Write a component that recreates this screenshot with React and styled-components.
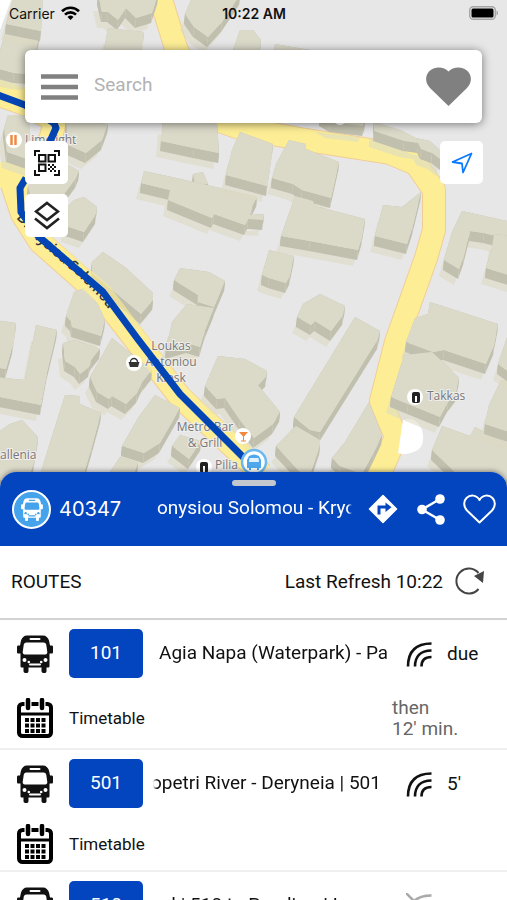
import React from "react"
import styled, { createGlobalStyle } from "styled-components"

const GlobalStyle = createGlobalStyle`
    * {
        box-sizing: border-box;
    }

    body {
        margin: 0;
        background-color: #fff;
        color: #111;
        font-family: Roboto, 'Liberation Sans', sans-serif;
    }

    button {
        padding: 0;
        border: none;
        background: none;
        color: inherit;
        font: inherit;
        cursor: pointer;
    }
`

const Page = styled.div`
    display: flex;
    flex-direction: column;
    height: 100vh;
    overflow: hidden;
`

const MapArea = styled.main`
    position: relative;
    flex: 0 0 54vh;
`

const MapCanvas = styled.svg`
    position: absolute;
    top: 0;
    left: 0;
    width: 100%;
    height: 100%;
    background-color: #e8e7e8;
`

const Overlay = styled.div`
    position: relative;
`

const StatusBar = styled.div`
    display: grid;
    grid-template-columns: 1fr auto 1fr;
    align-items: center;
    height: 28px;
    padding: 0 8px 2px 9px;
    font-family: Inter, sans-serif;
    font-size: 14px;
    color: #111;
`

const Carrier = styled.span`
    display: flex;
    align-items: center;
    gap: 6px;
`

const Clock = styled.time`
    font-weight: 600;
`

const Battery = styled.span`
    display: flex;
    justify-content: flex-end;
`

const SearchCard = styled.form`
    display: flex;
    align-items: center;
    gap: 16px;
    height: 73px;
    margin: 22px 25px 18px;
    padding: 0 11px 0 16px;
    border-radius: 6px;
    background-color: #fff;
    box-shadow: 0 1px 10px rgba(0, 0, 0, 0.5);
`

const SearchInput = styled.input`
    flex: 1;
    min-width: 0;
    padding: 0 0 4px;
    border: none;
    outline: none;
    background: none;
    font-family: inherit;
    font-size: 19px;

    &::placeholder {
        color: #b2b2b2;
        opacity: 1;
    }
`

const IconButton = styled.button`
    display: flex;
    flex-shrink: 0;
`

const MapControls = styled.div`
    display: flex;
    justify-content: space-between;
    align-items: flex-start;
    padding: 0 24px 0 25px;
`

const ControlStack = styled.div`
    display: flex;
    flex-direction: column;
    gap: 10px;
`

const MapButton = styled.button`
    display: flex;
    align-items: center;
    justify-content: center;
    width: 43px;
    height: 43px;
    border-radius: 5px;
    background-color: #fff;
`

const Sheet = styled.section`
    position: relative;
    flex: 1;
    min-height: 0;
    margin-top: -14px;
    overflow: hidden;
    border-radius: 16px 16px 0 0;
    background-color: #fff;
    box-shadow: 0 -1px 5px rgba(0, 0, 0, 0.4);
`

const StopHeader = styled.header`
    height: 74px;
    padding-top: 8px;
    background-color: #0345bf;
    color: #fff;
`

const Grabber = styled.div`
    width: 44px;
    height: 6px;
    margin: 0 auto;
    border-radius: 3px;
    background-color: #c3c8ce;
`

const StopInfo = styled.div`
    display: flex;
    align-items: center;
    height: 46px;
    padding: 0 11px 0 12px;
`

const StopBadge = styled.span`
    display: flex;
    align-items: center;
    justify-content: center;
    width: 39px;
    height: 39px;
    border: 2px solid #fff;
    border-radius: 50%;
    background-color: #45a3ec;
`

const StopCode = styled.span`
    width: 102px;
    padding-left: 8px;
    font-family: Inter, sans-serif;
    font-size: 20px;
`

const Ticker = styled.span`
    flex: 1;
    min-width: 0;
    padding-bottom: 2px;
    overflow: hidden;
    white-space: nowrap;
    font-size: 19px;
    line-height: 26px;
    text-indent: ${({ $shift }) => $shift || 0}px;
    mask-image: linear-gradient(to right, transparent, #000 4px, #000 calc(100% - 4px), transparent);
`

const StopActions = styled.div`
    display: flex;
    align-items: center;
    justify-content: space-between;
    width: 128px;
    margin-left: 16px;
`

const RoutesBar = styled.div`
    display: flex;
    align-items: center;
    height: 74px;
    padding: 0 22px 2px 11px;
    border-bottom: 2px solid #d2d2d2;
    font-size: 19px;
`

const RoutesTitle = styled.h2`
    flex: 1;
    margin: 0;
    font-size: 19px;
    font-weight: 400;
`

const Refresh = styled.button`
    display: flex;
    align-items: center;
    gap: 12px;
`

const RouteList = styled.ul`
    margin: 0;
    padding: 0;
    list-style: none;
`

const RouteItem = styled.li`
    padding: 9px 17px 0;
    border-bottom: 2px solid #efefef;
`

const RouteLine = styled.div`
    display: flex;
    align-items: center;
    height: 49px;
`

const RouteNumber = styled.a`
    display: flex;
    align-items: center;
    justify-content: center;
    width: 74px;
    height: 49px;
    margin: 0 10px 0 16px;
    padding-bottom: 2px;
    border-radius: 5px;
    background-color: #0345bf;
    color: #fff;
    font-size: 19px;
    text-decoration: none;
`

const Arrival = styled.span`
    display: flex;
    align-items: center;
    gap: 15px;
    width: 84px;
    margin-left: 16px;
    font-size: 19px;
`

const TimetableLine = styled.div`
    display: flex;
    align-items: center;
    min-height: 62px;
    padding-top: 10px;
`

const TimetableLink = styled.a`
    display: flex;
    flex: 1;
    align-items: center;
    gap: 16px;
    color: inherit;
    font-size: 17px;
    text-decoration: none;
`

const NextArrival = styled.p`
    width: 98px;
    margin: 0;
    padding: 9px 0;
    color: #666;
    font-size: 19px;
    line-height: 21px;
`

// Roof outlines, walls are extruded downwards from them
const buildings = [
    [[-5, 68], [8, 23], [40, 32], [36, 50], [28, 74], [14, 73]],
    [[14, -5], [43, -5], [41, 31], [6, 24]],
    [[98, -5], [158, -5], [152, 13], [136, 18], [126, 8], [118, 20], [108, 12], [102, 12]],
    [[108, 28], [144, 32], [141, 60], [102, 60]],
    [[193, -5], [240, -5], [222, 22], [208, 37], [194, 27], [185, 14]],
    [[233, 50], [240, 30], [253, 30], [261, 40], [258, 60], [230, 60]],
    [[275, 44], [310, 50], [310, 60], [272, 60]],
    [[8, 115], [30, 115], [30, 160], [7, 152], [4, 128]],
    [[66, 120], [108, 124], [102, 140], [86, 153], [68, 145]],
    [[28, 186], [60, 160], [79, 171], [76, 178], [64, 194], [30, 194]],
    [[66, 208], [74, 200], [84, 197], [97, 207], [96, 214], [84, 232], [66, 226]],
    [[163, 118], [217, 122], [219, 153], [194, 148], [161, 141]],
    [[193, 174], [203, 172], [208, 184], [195, 186]],
    [[144, 171], [172, 177], [220, 188], [257, 197], [252, 207], [250, 215], [264, 214], [263, 220], [248, 219], [245, 225], [214, 214], [212, 218], [168, 200], [170, 190], [141, 183]],
    [[240, 132], [273, 144], [267, 186], [226, 175], [232, 150]],
    [[289, 140], [306, 144], [306, 149], [339, 162], [331, 198], [302, 190], [293, 184], [272, 178], [276, 164]],
    [[295, 196], [313, 201], [315, 206], [365, 219], [362, 236], [358, 250], [310, 241], [281, 236]],
    [[383, 205], [402, 207], [421, 192], [413, 225], [407, 244], [375, 236]],
    [[374, 122], [400, 130], [416, 138], [430, 141], [443, 153], [441, 160], [432, 153], [421, 149], [418, 143], [404, 141], [374, 131]],
    [[320, 116], [365, 121], [363, 126], [330, 122]],
    [[462, 211], [507, 221], [512, 240], [484, 233], [470, 231], [464, 255], [459, 269], [444, 260], [452, 232]],
    [[494, 234], [512, 236], [512, 276], [486, 268], [492, 247]],
    [[92, 262], [103, 252], [125, 267], [153, 293], [153, 300], [141, 314], [92, 273]],
    [[66, 316], [74, 292], [84, 288], [98, 304], [105, 320], [101, 336], [72, 327], [71, 321]],
    [[63, 343], [75, 340], [100, 349], [91, 360], [89, 367], [80, 374], [75, 367], [65, 361]],
    [[90, 377], [112, 338], [152, 370], [142, 382], [137, 393], [126, 404], [112, 396], [109, 399], [97, 392]],
    [[180, 268], [209, 272], [225, 281], [214, 307], [198, 302], [198, 295], [174, 280]],
    [[166, 349], [172, 322], [187, 304], [214, 308], [205, 330], [200, 347], [187, 343]],
    [[-5, 320], [16, 323], [13, 344], [6, 369], [-5, 367]],
    [[-5, 377], [25, 380], [36, 325], [57, 330], [47, 372], [41, 405], [-5, 396]],
    [[65, 395], [80, 396], [80, 404], [101, 413], [92, 446], [82, 480], [40, 475], [54, 430]],
    [[-5, 434], [10, 424], [22, 420], [38, 437], [34, 462], [28, 480], [-5, 480]],
    [[155, 395], [180, 408], [160, 443], [144, 453], [122, 446], [138, 418]],
    [[172, 446], [180, 435], [201, 441], [189, 459]],
    [[120, 457], [138, 463], [134, 475], [108, 475]],
    [[205, 386], [218, 356], [245, 359], [267, 371], [266, 377], [258, 385], [280, 412], [273, 424], [254, 438], [240, 420], [225, 398], [217, 399]],
    [[297, 317], [303, 304], [320, 294], [345, 306], [343, 315], [331, 331], [315, 321], [311, 325]],
    [[262, 275], [269, 250], [294, 256], [290, 275], [286, 283], [269, 278]],
    [[294, 417], [355, 317], [380, 331], [378, 339], [320, 432], [310, 430]],
    [[276, 446], [296, 426], [320, 440], [320, 445], [309, 478], [298, 470]],
    [[332, 458], [345, 442], [369, 402], [376, 420], [382, 435], [374, 452], [362, 474], [340, 466]],
    [[406, 342], [415, 318], [428, 314], [430, 302], [498, 324], [494, 345], [486, 364], [444, 350], [433, 352]],
    [[391, 397], [404, 355], [432, 352], [447, 366], [459, 378], [456, 392], [448, 402], [440, 417], [408, 404]],
    [[432, 450], [442, 426], [470, 436], [475, 427], [512, 446], [512, 480], [458, 475]],
    [[485, 424], [489, 405], [501, 380], [512, 380], [512, 433]],
    [[498, 364], [507, 337], [512, 337], [512, 374]],
]

const WALL = [-1, 10]

const toPoints = (list) => list.map(([x, y]) => `${x},${y}`).join(" ")

const Building = ({ roof }) => (
    <g>
        <polygon points={toPoints(roof.map(([x, y]) => [x - 5, y + 16]))} fill="#dcdac3" opacity="0.6" />
        {roof.map((a, i) => {
            const b = roof[(i + 1) % roof.length]
            return (
                <polygon
                    key={i}
                    points={toPoints([a, b, [b[0] + WALL[0], b[1] + WALL[1]], [a[0] + WALL[0], a[1] + WALL[1]]])}
                    fill="#c1bfad"
                />
            )
        })}
        <polygon points={toPoints(roof)} fill="#dbd9c8" />
    </g>
)

const BusFront = ({ width, height, cut }) => (
    <svg width={width} height={height} viewBox="0 0 36 38" aria-hidden="true">
        <path
            fill="currentColor"
            d="M10 .5h16c3 0 5 2 6 5l1 5h1.500c1 0 1.500.5 1.500 1.500v5c0 1-.5 1.500-1.500 1.500H32.500v12.500c0 1-.5 1.500-1.500 1.500h-1.500V36c0 1.500-.7 2-2 2h-1c-1.200 0-2-.7-2-2v-3.500h-13V36c0 1.500-.8 2-2 2h-1c-1.300 0-2-.7-2-2v-3.500H5c-1 0-1.500-.5-1.500-1.500V18.500h-2C.5 18.500 0 18 0 17v-5c0-1 .5-1.500 1.500-1.500H3l1-5C5 2.500 7 .5 10 .5z"
        />
        <path fill={cut} d="M9.500 7.500h17c1.800 0 2.500 1 2.800 2.500l1 7c0 1.500-.6 2.500-2 2.500H7.700c-1.400 0-2-1-2-2.500l1-7c.3-1.500 1-2.500 2.800-2.500z" />
        <rect x="12.500" y="3" width="11" height="2" rx="1" fill={cut} />
        <rect x="12" y="28.500" width="12" height="2" rx="1" fill={cut} />
        <g fill={cut}>
            <circle cx="7.500" cy="25" r="2" />
            <circle cx="28.500" cy="25" r="2" />
            <circle cx="11.800" cy="27" r="1.300" />
            <circle cx="24.200" cy="27" r="1.300" />
        </g>
    </svg>
)

const CalendarIcon = () => (
    <svg width="36" height="40" viewBox="0 0 36 40" aria-hidden="true">
        <rect x="2" y="6" width="32" height="32" rx="3.500" fill="#fff" stroke="#000" strokeWidth="4" />
        <path d="M2 16h32" stroke="#000" strokeWidth="3" />
        <path d="M11 2v9M25 2v9" stroke="#fff" strokeWidth="7" />
        <path d="M11 2v8M25 2v8" stroke="#000" strokeWidth="4.500" strokeLinecap="round" />
        {[20, 25.5, 31].map((y) =>
            [8, 13.500, 19, 24.500].map((x) => <rect key={`${x}-${y}`} x={x} y={y} width="4" height="4" />)
        )}
    </svg>
)

const HeartSolid = () => (
    <svg width="45" height="39" viewBox="0 0 45 39" aria-hidden="true">
        <path
            fill="#808080"
            d="M22.500 39 4 21C-1 16-1 9 3 4.500 8-.8 17.500-1 22.500 4.500 27.500-1 37-.8 42 4.500c4 4.500 4 11.500-1 16.500z"
        />
    </svg>
)

const HeartOutline = () => (
    <svg width="33" height="30" viewBox="0 0 33 30" aria-hidden="true">
        <path
            fill="none"
            stroke="#fff"
            strokeWidth="2"
            strokeLinejoin="round"
            d="M16.500 28.500 4.500 17C0 12.500.5 7 3.500 4 7 .5 13.500.5 16.500 6 19.500.5 26 .5 29.500 4c3 3 3.500 8.500-1 13z"
        />
    </svg>
)

const DirectionsIcon = () => (
    <svg width="30" height="30" viewBox="0 0 30 30" aria-hidden="true">
        <path d="M15 1.500 28.500 15 15 28.500 1.500 15z" fill="#fff" stroke="#fff" strokeWidth="1.500" strokeLinejoin="round" />
        <path d="M11 20.500V13h8" fill="none" stroke="#0345bf" strokeWidth="3" />
        <path d="m17.500 8.500 6 4.700-6 4.700z" fill="#0345bf" />
    </svg>
)

const ShareIcon = () => (
    <svg width="28" height="31" viewBox="0 0 28 31" aria-hidden="true">
        <path d="M23 5 5 15.500 23 26" fill="none" stroke="#fff" strokeWidth="2.500" />
        <g fill="#fff">
            <circle cx="23" cy="5" r="4.800" />
            <circle cx="5" cy="15.500" r="4.800" />
            <circle cx="23" cy="26" r="4.800" />
        </g>
    </svg>
)

const MenuIcon = () => (
    <svg width="37" height="26" viewBox="0 0 37 26" aria-hidden="true">
        <path d="M0 2.500h37M0 13h37M0 23.500h37" stroke="#808080" strokeWidth="4.500" />
    </svg>
)

const QrIcon = () => (
    <svg width="26" height="26" viewBox="0 0 26 26" fill="none" stroke="#111" strokeWidth="2" aria-hidden="true">
        <path d="M1 6V1h5M20 1h5v5M25 20v5h-5M6 25H1v-5" />
        <path d="M5 5h6.500v6.500H5zM14.500 5H21v6.500h-6.500zM5 14.500h6.500V21H5z" />
        <path d="M14 14h2v2h-2zM18 14h2v2h-2zM16 16h2v2h-2zM20 16h2v2h-2zM14 18h2v2h-2zM18 18h2v2h-2zM16 20h2v2h-2zM20 20h2v2h-2z" fill="#111" stroke="none" />
    </svg>
)

const LayersIcon = () => (
    <svg width="26" height="29" viewBox="0 0 26 29" fill="none" stroke="#222" strokeWidth="2.600" aria-hidden="true">
        <path d="M13 2 24 10.500 13 19 2 10.500z" />
        <path d="m1 17.500 12 9.500 12-9.500" />
    </svg>
)

const LocateIcon = () => (
    <svg width="22" height="22" viewBox="0 0 22 22" fill="none" stroke="#0a7aff" strokeWidth="1.800" strokeLinejoin="round" aria-hidden="true">
        <path d="M20.500 1.500 1.500 10l9.500 1.500 1 9z" />
    </svg>
)

const WifiIcon = () => (
    <svg width="19" height="14" viewBox="0 0 19 14" fill="none" stroke="#000" strokeWidth="2.600" aria-hidden="true">
        <path d="M1 5.200a12.200 12.200 0 0 1 17 0M4 8.600a7.800 7.800 0 0 1 11 0" />
        <path d="m9.500 14-3-3a4.300 4.300 0 0 1 6 0z" fill="#000" stroke="none" />
    </svg>
)

const BatteryIcon = () => (
    <svg width="30" height="14" viewBox="0 0 30 14" aria-hidden="true">
        <rect x=".7" y=".7" width="25.600" height="12.600" rx="3.500" fill="none" stroke="#a5a5a5" strokeWidth="1.400" />
        <rect x="2.500" y="2.500" width="22" height="9" rx="1.500" />
        <path d="M27.500 4.500c2 .8 2 4.200 0 5z" fill="#a5a5a5" />
    </svg>
)

const RefreshIcon = () => (
    <svg width="30" height="28" viewBox="0 0 30 28" aria-hidden="true">
        <path d="M23.500 22A12.500 12.500 0 1 1 23.500 6" fill="none" stroke="#444" strokeWidth="2" />
        <path d="m19 9 10-5-1 12z" fill="#444" />
    </svg>
)

const SignalIcon = ({ off }) => (
    <svg width="26" height="26" viewBox="0 0 26 26" fill="none" stroke={off ? "#aaa" : "#111"} strokeWidth="2.600" aria-hidden="true">
        <path d="M2 25.500c0-14 7-23 23.500-23M9 25.500c0-9.500 5-16 16.500-16M15.500 25.500c0-6 3-9.500 10-9.500" />
        {off && <path d="m0 0 25 25" />}
    </svg>
)

const MapView = () => (
    <MapCanvas viewBox="0 0 507 486" preserveAspectRatio="xMidYMin slice" role="img" aria-label="Map">
        <g fill="none" strokeLinejoin="round">
            {[["#f0cd96", 24], ["#fdee96", 22]].map(([color, width]) => (
                <g key={color} stroke={color} strokeWidth={width}>
                    <path d="M158-10 176 48 208 117 240 128 300 139 390 153 416 164 434 190 434 230 426 258 396 342 381 401 396 437 376 482" />
                    <path d="M-10 92 25 104 55 121 50 141 10 178 22 214 40 242 102 297 180 397 262 474" />
                </g>
            ))}
            <path d="M-10 88 25 99M-5 178 20 170M10 160 20 200" stroke="#fdee96" strokeWidth="22" />
        </g>
        <path d="M0 30 11 0H0z" fill="#fff" />
        <path d="M403 420q14-4 19 10 4 16-6 21-10 5-18 2z" fill="#fff" />
        {buildings.map((roof, i) => (
            <Building key={i} roof={roof} />
        ))}
        <path d="M22 208 40 240 103 294 180 395 256 466" fill="none" stroke="#fdee96" strokeWidth="20" opacity="0.6" />
        <defs>
            <path id="street" d="M16 218 36 240 78 276 100 298 124 330 160 375" />
        </defs>
        <g fontFamily="'Open Sans', sans-serif">
            <text fontSize="14" fontWeight="600" fill="#333">
                <textPath href="#street">Dionysiou Solomou</textPath>
            </text>
            <g fontSize="12" fill="#77777c" stroke="#efeee8" strokeWidth="2" paintOrder="stroke">
                <text x="25" y="144">Limelight</text>
                <text x="171" y="350" textAnchor="middle">Loukas</text>
                <text x="171" y="366" textAnchor="middle">Antoniou</text>
                <text x="171" y="382" textAnchor="middle">Kiosk</text>
                <text x="205" y="431" textAnchor="middle">Metro Bar</text>
                <text x="205" y="447" textAnchor="middle">&amp; Grill</text>
                <text x="215" y="469">Pilia</text>
                <text x="0" y="459">allenia</text>
                <text x="427" y="400">Takkas</text>
            </g>
        </g>
        <g fill="none" stroke="#0345b5" strokeWidth="7" strokeLinejoin="round">
            <path d="M-5 94 25 105 54 123 56 128 48 146" />
            <path d="M26 178 20 188 21 212 38 236 103 292 137 338 180 394 250 464" />
        </g>
        <g fill="#fff">
            <circle cx="14" cy="140" r="8" />
            <circle cx="134" cy="363" r="8" />
            <circle cx="204" cy="467" r="8" />
            <circle cx="243" cy="436" r="8" />
            <circle cx="415" cy="397" r="8" />
            <circle cx="340" cy="118" r="7" />
        </g>
        <path d="M11.500 135v10M15.500 135v10" stroke="#ef8a45" strokeWidth="2.500" />
        <path d="M128.500 362h11l-1.500 5h-8z" fill="#333" />
        <path d="M130.500 362a3.500 3.500 0 0 1 7 0" fill="none" stroke="#333" strokeWidth="1.300" />
        <path d="M239 432h9l-4 4.500v4h2v1h-5v-1h2v-4z" fill="#f0883e" />
        {[[204, 467], [416, 397]].map(([x, y]) => (
            <g key={x}>
                <rect x={x - 4} y={y - 5} width="8" height="11" rx="2" fill="#222" />
                <rect x={x - 1} y={y - 1} width="2" height="6" fill="#fff" />
            </g>
        ))}
        <circle cx="254" cy="462" r="12" fill="#fff" stroke="#6cb8f0" strokeWidth="2.500" />
        <path d="M249 456q5-3 10 0l2 4v8h-2v2h-2v-2h-6v2h-2v-2h-2v-8z" fill="#4fa8ec" />
        <path d="M249.500 458h9l.5 4h-10z" fill="#e2f2fd" />
    </MapCanvas>
)

const routes = [
    { number: "101", name: "Agia Napa (Waterpark) - Pa", shift: 6, arrival: "due", next: "12' min." },
    { number: "501", name: "opetri River - Deryneia | 501", shift: -2, arrival: "5'" },
    { number: "510", name: "al | 510 to Paralimni L", shift: 8 },
]

const Route = ({ number, name, shift, arrival, next }) => (
    <RouteItem>
        <RouteLine>
            <BusFront width={36} height={38} cut="#fff" />
            <RouteNumber href="#route">{number}</RouteNumber>
            <Ticker $shift={shift}>{name}</Ticker>
            <Arrival>
                <SignalIcon off={!arrival} />
                {arrival}
            </Arrival>
        </RouteLine>
        <TimetableLine>
            <TimetableLink href="#timetable">
                <CalendarIcon />
                Timetable
            </TimetableLink>
            {next && (
                <NextArrival>
                    then
                    <br />
                    {next}
                </NextArrival>
            )}
        </TimetableLine>
    </RouteItem>
)

const App = () => {

    return (
        <Page>
            <GlobalStyle />
            <MapArea>
                <MapView />
                <Overlay>
                    <StatusBar>
                        <Carrier>
                            Carrier
                            <WifiIcon />
                        </Carrier>
                        <Clock>10:22 AM</Clock>
                        <Battery>
                            <BatteryIcon />
                        </Battery>
                    </StatusBar>
                    <SearchCard>
                        <IconButton type="button" aria-label="Menu">
                            <MenuIcon />
                        </IconButton>
                        <SearchInput type="text" placeholder="Search" aria-label="Search" />
                        <IconButton type="button" aria-label="Favourites">
                            <HeartSolid />
                        </IconButton>
                    </SearchCard>
                    <MapControls>
                        <ControlStack>
                            <MapButton aria-label="Scan code">
                                <QrIcon />
                            </MapButton>
                            <MapButton aria-label="Layers">
                                <LayersIcon />
                            </MapButton>
                        </ControlStack>
                        <MapButton aria-label="My location">
                            <LocateIcon />
                        </MapButton>
                    </MapControls>
                </Overlay>
            </MapArea>
            <Sheet>
                <StopHeader>
                    <Grabber />
                    <StopInfo>
                        <StopBadge>
                            <BusFront width={22} height={23} cut="#45a3ec" />
                        </StopBadge>
                        <StopCode>40347</StopCode>
                        <Ticker $shift={4}>onysiou Solomou - Kryo</Ticker>
                        <StopActions>
                            <IconButton aria-label="Directions">
                                <DirectionsIcon />
                            </IconButton>
                            <IconButton aria-label="Share">
                                <ShareIcon />
                            </IconButton>
                            <IconButton aria-label="Add to favourites">
                                <HeartOutline />
                            </IconButton>
                        </StopActions>
                    </StopInfo>
                </StopHeader>
                <RoutesBar>
                    <RoutesTitle>ROUTES</RoutesTitle>
                    <Refresh>
                        Last Refresh 10:22
                        <RefreshIcon />
                    </Refresh>
                </RoutesBar>
                <RouteList>
                    {routes.map((route) => (
                        <Route key={route.number} {...route} />
                    ))}
                </RouteList>
            </Sheet>
        </Page>
    )
}

export default App
